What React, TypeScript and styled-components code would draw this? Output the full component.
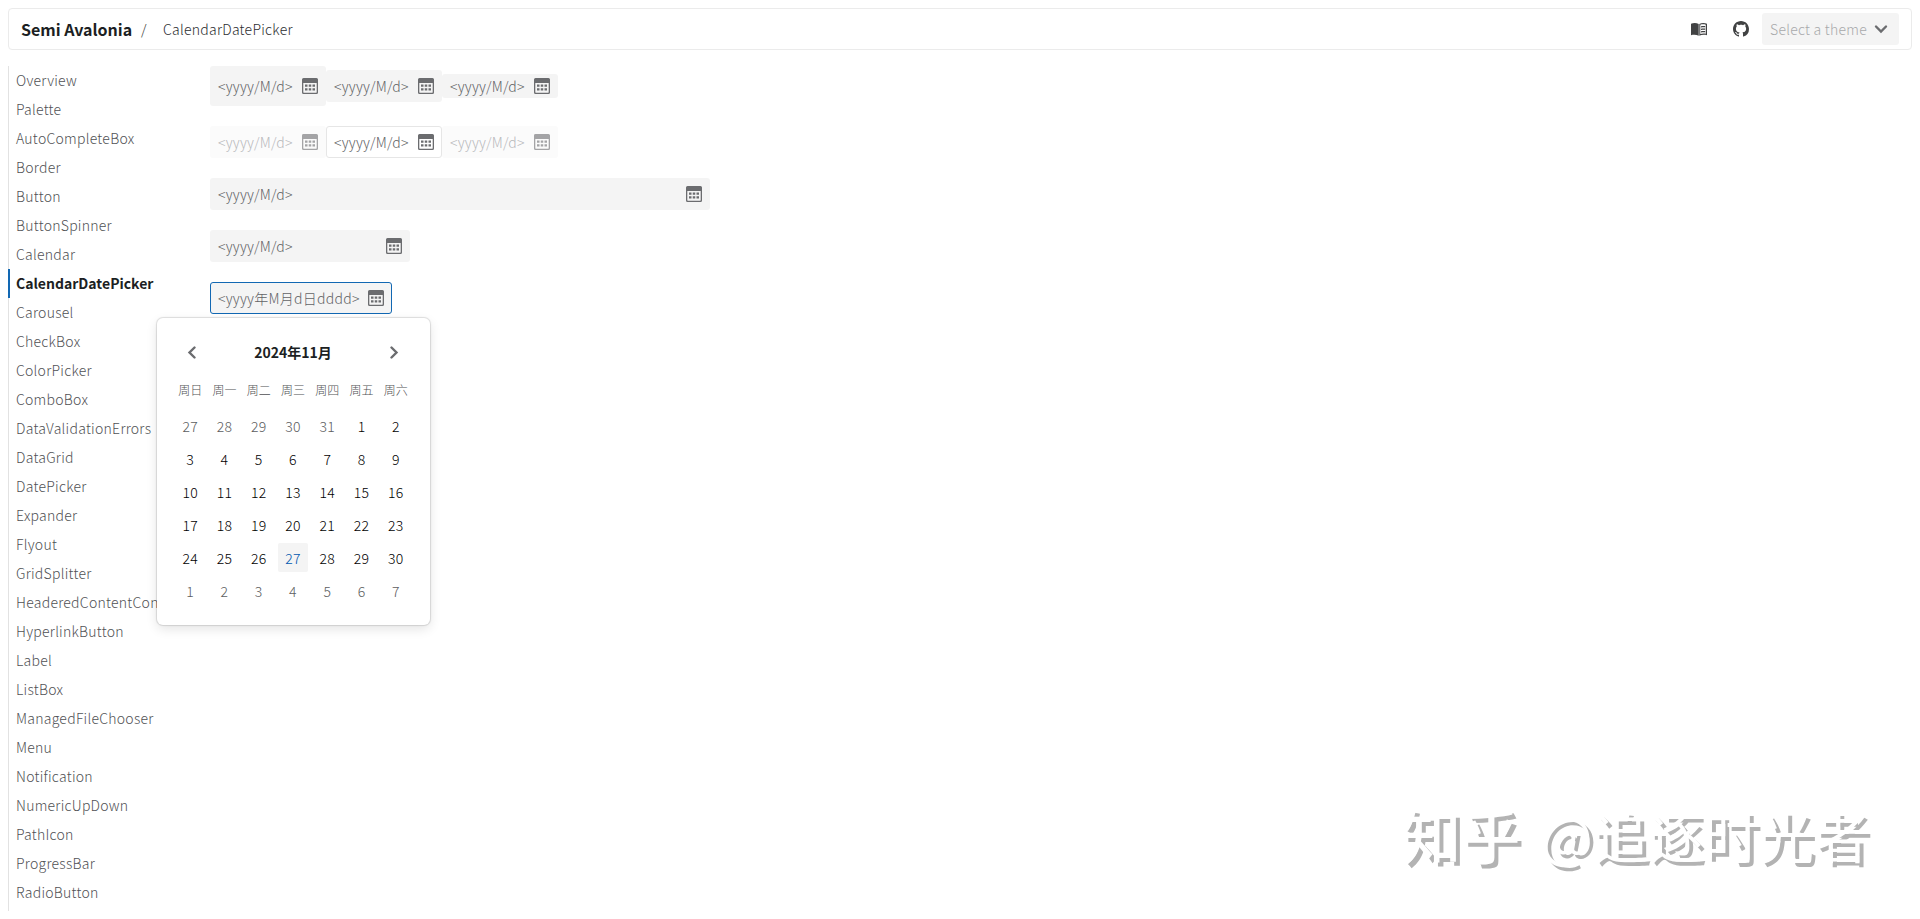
import { useState } from "react";
import styled, { createGlobalStyle } from "styled-components";

const GlobalStyle = createGlobalStyle`
  * {
    box-sizing: border-box;
  }
  body {
    margin: 0;
    background: #fff;
    overflow: hidden;
    font-family: "Noto Sans CJK SC", "Noto Sans", sans-serif;
    font-size: 14px;
    font-weight: 300;
    letter-spacing: 0.26px;
    color: #1c1f23;
  }
  button {
    font: inherit;
    letter-spacing: inherit;
    border: 0;
    padding: 0;
    background: none;
  }
`;

const Page = styled.div`
  height: 919px;
  padding: 8px;
  display: flex;
  flex-direction: column;
  gap: 16px;
`;

const Header = styled.header`
  height: 42px;
  padding: 0 12px;
  display: flex;
  align-items: center;
  border: 1px solid #ebebeb;
  border-radius: 4px;
`;

const Brand = styled.span`
  width: 112px;
  font-size: 16px;
  font-weight: 600;
  letter-spacing: 0;
  white-space: nowrap;
`;

const Slash = styled.span`
  width: 30px;
  padding-left: 8px;
  color: #333;
`;

const Crumb = styled.span`
  flex: 1;
  color: #2c2d30;
`;

const HeaderIcon = styled.button`
  width: 42px;
  height: 32px;
  display: flex;
  align-items: center;
  justify-content: center;
  color: #414243;
`;

const ThemeSelect = styled.button`
  width: 137px;
  height: 32px;
  padding: 0 11px 0 8px;
  display: flex;
  align-items: center;
  justify-content: space-between;
  background: #f4f4f4;
  border-radius: 3px;
  color: #a8a9ab;
`;

const Body = styled.div`
  flex: 1;
  min-height: 0;
  display: flex;
`;

const Sidebar = styled.nav`
  width: 202px;
  overflow: hidden;
  box-shadow: inset 1px 0 #e2e2e2;
`;

const SidebarItem = styled.div<{ $active: boolean }>`
  height: 29px;
  padding-left: 6px;
  line-height: 29px;
  white-space: nowrap;
  border-left: 2px solid ${(props) => (props.$active ? "#1268b3" : "transparent")};
  color: ${(props) => (props.$active ? "#1c1f23" : "#505154")};
  font-weight: ${(props) => (props.$active ? 600 : 300)};
  letter-spacing: ${(props) => (props.$active ? 0 : 0.26)}px;
`;

const Content = styled.main`
  display: flex;
  flex-direction: column;
  align-items: flex-start;
  gap: 20px;
`;

const Row = styled.div`
  display: flex;
  align-items: center;
`;

const PickerBox = styled.div<{ $width: number; $height: number; $variant: string }>`
  position: relative;
  width: ${(props) => props.$width}px;
  height: ${(props) => props.$height}px;
  padding: 0 7px;
  display: flex;
  align-items: center;
  justify-content: space-between;
  white-space: nowrap;
  border-radius: 3px;
  border: 1px solid
    ${({ $variant }) =>
      $variant === "focused" ? "#1268b3" : $variant === "bordered" ? "#e6e6e6" : "transparent"};
  background: ${({ $variant }) =>
    $variant === "bordered" ? "#fff" : $variant === "disabled" ? "#fbfbfb" : "#f4f4f4"};
  color: ${({ $variant }) => ($variant === "disabled" ? "#b8b9bb" : "#626366")};

  & > svg {
    opacity: ${({ $variant }) => ($variant === "disabled" ? 0.6 : 1)};
  }
`;

const Popup = styled.div`
  position: absolute;
  left: -54px;
  top: 35px;
  width: 273px;
  height: 307px;
  padding: 18px 17px 0 16px;
  background: #fff;
  border-radius: 6px;
  box-shadow: 0 0 1px 1px rgba(0, 0, 0, 0.12), 0 4px 12px rgba(0, 0, 0, 0.11);
  z-index: 2;
`;

const CalendarHeader = styled.div`
  height: 32px;
  padding: 0 12px;
  display: flex;
  align-items: center;
  justify-content: space-between;
  color: #1c1f23;
  font-weight: 600;
  letter-spacing: 0;
`;

const CalendarGrid = styled.div`
  margin-top: 4px;
  display: grid;
  grid-template-columns: repeat(7, 1fr);
  grid-template-rows: 37px repeat(6, 33px);
  justify-items: center;
  align-items: center;
`;

const WeekDay = styled.span`
  margin-bottom: 2px;
  font-size: 12px;
  line-height: 30px;
  letter-spacing: 0;
  color: #505154;
`;

const Day = styled.button<{ $muted: boolean; $today: boolean }>`
  width: 30px;
  height: 29px;
  border-radius: 2px;
  background: ${(props) => (props.$today ? "#f4f4f4" : "transparent")};
  color: ${(props) => (props.$today ? "#0058b0" : props.$muted ? "#5c5d60" : "#000")};
`;

const Watermark = styled.div`
  position: absolute;
  left: 1402px;
  top: 794px;
  display: flex;
  gap: 20px;
  color: #fff;
  font-size: 55px;
  line-height: 80px;
  font-weight: 400;
  letter-spacing: 0.3px;
  white-space: nowrap;
  text-shadow: 4px 4px 0 #b3b3b3;
  pointer-events: none;
`;

const WatermarkLogo = styled.span`
  font-size: 59px;
  font-weight: 500;
`;

const pages = [
  "Overview",
  "Palette",
  "AutoCompleteBox",
  "Border",
  "Button",
  "ButtonSpinner",
  "Calendar",
  "CalendarDatePicker",
  "Carousel",
  "CheckBox",
  "ColorPicker",
  "ComboBox",
  "DataValidationErrors",
  "DataGrid",
  "DatePicker",
  "Expander",
  "Flyout",
  "GridSplitter",
  "HeaderedContentControl",
  "HyperlinkButton",
  "Label",
  "ListBox",
  "ManagedFileChooser",
  "Menu",
  "Notification",
  "NumericUpDown",
  "PathIcon",
  "ProgressBar",
  "RadioButton",
];

const weekDays = ["周日", "周一", "周二", "周三", "周四", "周五", "周六"];

// 2024-10-27 is the first cell, six weeks in total
const days = Array.from({ length: 42 }, (_, i) => new Date(2024, 9, 27 + i));

function CalendarIcon() {
  return (
    <svg width="16" height="16" viewBox="0 0 16 16" fill="#6b6c6f">
      <path
        fillRule="evenodd"
        d="M1.5 0h13A1.5 1.5 0 0 1 16 1.5v13a1.5 1.5 0 0 1-1.5 1.5h-13A1.5 1.5 0 0 1 0 14.5v-13A1.5 1.5 0 0 1 1.5 0ZM1.3 5v9.2c0 .3.2.5.5.5h12.4c.3 0 .5-.2.5-.5V5H1.3Z"
      />
      <path d="M3 6.500h2.500v2.200H3zM6.750 6.500h2.500v2.200h-2.500zM10.500 6.500H13v2.200h-2.500zM3 10.300h2.500v2.200H3zM6.750 10.300h2.500v2.200h-2.500zM10.500 10.300H13v2.200h-2.500z" />
    </svg>
  );
}

function BookIcon() {
  return (
    <svg width="16" height="13" viewBox="0 0 16 13" fill="currentColor">
      <path d="M0 .8C2.6-.2 5.5-.1 7.7 1v11.7C5.5 11.6 2.6 11.4 0 12.2Z" />
      <path
        fillRule="evenodd"
        d="M8.3 1C10.500-.1 13.400-.2 16 .8v11.400c-2.600-.8-5.500-.6-7.700.5ZM9.300 1.800v9.300c1.700-.6 3.700-.7 5.500-.3V1.700c-1.800-.5-3.800-.5-5.500.1Z"
      />
      <path d="M10 3.300c1.300-.4 2.700-.5 4.200-.2v1.200c-1.500-.3-2.900-.2-4.200.2zM10 5.800c1.300-.4 2.700-.5 4.200-.2v1.200c-1.500-.3-2.900-.2-4.200.2zM10 8.300c1.300-.4 2.700-.5 4.200-.2v1.200c-1.500-.3-2.900-.2-4.200.2z" />
    </svg>
  );
}

function GithubIcon() {
  return (
    <svg width="16" height="16" viewBox="0 0 16 16" fill="currentColor">
      <path d="M8 0C3.58 0 0 3.58 0 8c0 3.54 2.29 6.53 5.47 7.59.4.07.55-.17.55-.38 0-.19-.01-.82-.01-1.49-2.01.37-2.53-.49-2.69-.94-.09-.23-.48-.94-.82-1.13-.28-.15-.68-.52-.01-.53.63-.01 1.08.58 1.23.82.72 1.21 1.87.87 2.33.66.07-.52.28-.87.51-1.07-1.78-.2-3.64-.89-3.64-3.95 0-.87.31-1.59.82-2.15-.08-.2-.36-1.02.08-2.12 0 0 .67-.21 2.2.82.64-.18 1.32-.27 2-.27s1.36.09 2 .27c1.53-1.04 2.2-.82 2.2-.82.44 1.1.16 1.92.08 2.12.51.56.82 1.27.82 2.15 0 3.07-1.87 3.75-3.65 3.95.29.25.54.73.54 1.48 0 1.07-.01 1.93-.01 2.2 0 .21.15.46.55.38A8.01 8.01 0 0 0 16 8c0-4.42-3.58-8-8-8Z" />
    </svg>
  );
}

function Chevron({ direction }: { direction: "left" | "right" | "down" }) {
  const paths = {
    left: "M9.5 2.5 4.5 7.5l5 5",
    right: "M4.5 2.5l5 5-5 5",
    down: "M2 4.5l5 5 5-5",
  };
  return (
    <svg width="14" height="14" viewBox="0 0 14 14" fill="none" stroke="#6b6c6f" strokeWidth="2.4" strokeLinecap="round">
      <path d={paths[direction]} />
    </svg>
  );
}

function CalendarPopup() {
  return (
    <Popup>
      <CalendarHeader>
        <Chevron direction="left" />
        <span>2024年11月</span>
        <Chevron direction="right" />
      </CalendarHeader>
      <CalendarGrid>
        {weekDays.map((name) => (
          <WeekDay key={name}>{name}</WeekDay>
        ))}
        {days.map((day, i) => (
          <Day
            key={i}
            $muted={day.getMonth() !== 10}
            $today={day.getMonth() === 10 && day.getDate() === 27}
          >
            {day.getDate()}
          </Day>
        ))}
      </CalendarGrid>
    </Popup>
  );
}

interface PickerProps {
  width?: number;
  height?: number;
  variant?: string;
  format?: string;
  open?: boolean;
}

function DatePicker({ width = 116, height = 32, variant = "filled", format = "yyyy/M/d", open = false }: PickerProps) {
  return (
    <PickerBox $width={width} $height={height} $variant={variant}>
      <span>{`<${format}>`}</span>
      <CalendarIcon />
      {open && <CalendarPopup />}
    </PickerBox>
  );
}

function App() {
  const [current, setCurrent] = useState("CalendarDatePicker");

  return (
    <Page>
      <GlobalStyle />
      <Header>
        <Brand>Semi Avalonia</Brand>
        <Slash>/</Slash>
        <Crumb>{current}</Crumb>
        <HeaderIcon>
          <BookIcon />
        </HeaderIcon>
        <HeaderIcon>
          <GithubIcon />
        </HeaderIcon>
        <ThemeSelect>
          Select a theme
          <Chevron direction="down" />
        </ThemeSelect>
      </Header>
      <Body>
        <Sidebar>
          {pages.map((name) => (
            <SidebarItem key={name} $active={name === current} onClick={() => setCurrent(name)}>
              {name}
            </SidebarItem>
          ))}
        </Sidebar>
        <Content>
          <Row>
            <DatePicker height={40} />
            <DatePicker />
            <DatePicker height={24} />
          </Row>
          <Row>
            <DatePicker variant="disabled" />
            <DatePicker variant="bordered" />
            <DatePicker variant="disabled" />
          </Row>
          <DatePicker width={500} />
          <DatePicker width={200} />
          <DatePicker width={182} variant="focused" format="yyyy年M月d日dddd" open />
        </Content>
      </Body>
      <Watermark>
        <WatermarkLogo>知乎</WatermarkLogo>
        <span>@追逐时光者</span>
      </Watermark>
    </Page>
  );
}

export default App;
